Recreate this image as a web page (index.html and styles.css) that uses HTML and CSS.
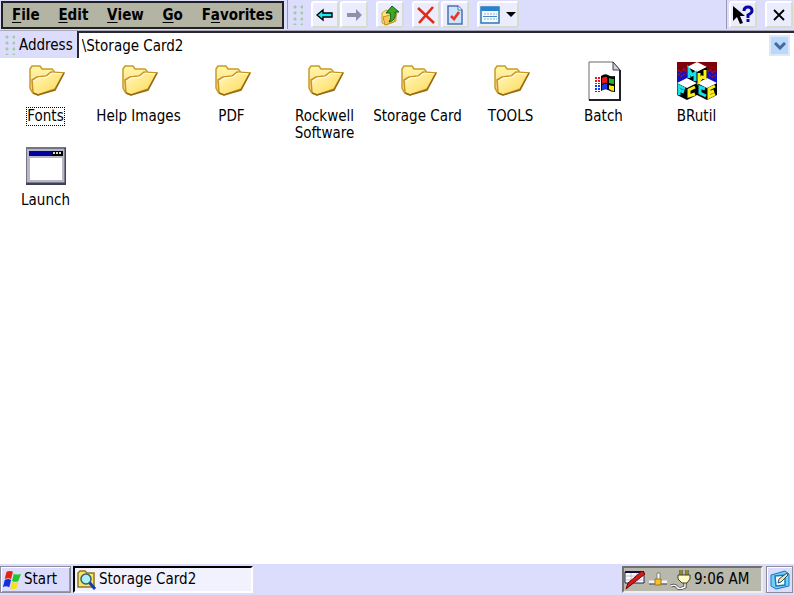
FILE: index.html
```html
<!DOCTYPE html>
<html lang="en">
<head>
  <meta charset="UTF-8">
  <meta name="viewport" content="width=device-width, initial-scale=1.0">
  <title>Storage Card2</title>
  <link rel="stylesheet" href="styles.css">
</head>
<body>
  <!-- shared icons -->
  <svg class="defs" width="0" height="0" aria-hidden="true">
    <defs>
      <linearGradient id="back" x1="0" y1="0" x2="0" y2="1">
        <stop offset="0" stop-color="#fffaa0"/>
        <stop offset="1" stop-color="#ffcf9c"/>
      </linearGradient>
      <linearGradient id="front" x1="0" y1="0" x2="1" y2="1">
        <stop offset="0" stop-color="#fff8c0"/>
        <stop offset="1" stop-color="#ffd850"/>
      </linearGradient>
      <symbol id="folder" viewBox="0 0 40 40">
        <path d="M4 8l2-3h8l2 3h10l2 2v17l-17 6-5-2-2-4z" fill="url(#back)" stroke="#c89c28" stroke-width="1.5"/>
        <path d="M6 19l5-3 9-1 5-4 13 1-9 16-17 6-5-2z" fill="url(#front)" stroke="#c89420" stroke-width="1.5"/>
        <path d="M8 20l4-3 9-1 5-4 11 1" fill="none" stroke="#fff"/>
        <path d="M38 12l-9 17-17 5-5-2" fill="none" stroke="#946c14" stroke-width="1.5"/>
      </symbol>
    </defs>
  </svg>

  <header class="toolbar">
    <nav class="menu">
      <button><u>F</u>ile</button>
      <button><u>E</u>dit</button>
      <button><u>V</u>iew</button>
      <button><u>G</u>o</button>
      <button>F<u>a</u>vorites</button>
    </nav>
    <div class="tools">
      <span class="grip"></span>
      <div class="group">
        <button class="tool" aria-label="Back">
          <svg width="18" height="16" viewBox="0 0 18 16"><path d="M1 8l6-5v3h9v4H7v3z" fill="#18e8f0" stroke="#000" stroke-width="1.4"/></svg>
        </button>
        <button class="tool" aria-label="Forward">
          <svg width="18" height="16" viewBox="0 0 18 16"><path d="M17 8l-6-6v4H2v4h9v4z" fill="#9090ac"/></svg>
        </button>
      </div>
      <button class="tool" aria-label="Up">
        <svg width="20" height="22" viewBox="0 0 20 22">
          <path d="M2 9l4-3 3 1h7v10l-10 4-4-2z" fill="#fce480" stroke="#c8a030"/>
          <path d="M3 13l7-2 7-2-3 9-9 3z" fill="#f8c858" stroke="#c09020"/>
          <path d="M9 18c2-3 2-6 1-9H6l6-7 7 6h-4c1 5-1 9-6 10z" fill="#38a828" stroke="#146010"/>
        </svg>
      </button>
      <div class="group">
        <button class="tool" aria-label="Delete">
          <svg width="20" height="20" viewBox="0 0 20 20"><path d="M2 3l16 15M17 2L3 18" fill="none" stroke="#e02c14" stroke-width="2.6"/></svg>
        </button>
        <button class="tool" aria-label="Properties">
          <svg width="18" height="20" viewBox="0 0 18 20">
            <path d="M2 1h10l4 4v14H2z" fill="#cce4fc" stroke="#4c70b0" stroke-width="1.5"/>
            <path d="M12 1v4h4" fill="#fff" stroke="#4c70b0"/>
            <path d="M5 11l3 3 5-7" fill="none" stroke="#e83420" stroke-width="2.6"/>
          </svg>
        </button>
      </div>
      <button class="tool views" aria-label="Views">
        <svg width="20" height="18" viewBox="0 0 20 18">
          <path d="M1 1h18v16H1z" fill="#f4faff" stroke="#2878b8" stroke-width="1.5"/>
          <path d="M1 1h18v4H1z" fill="#2484d0"/>
          <path d="M4 8h13M4 13h13" stroke="#a0a8b0" stroke-dasharray="2 1"/>
          <path d="M3 10.500h14" stroke="#3c88d0"/>
        </svg>
        <svg width="10" height="5" viewBox="0 0 10 5"><path d="M0 0h10L5 5z"/></svg>
      </button>
    </div>
    <div class="window-tools">
      <button class="tool" aria-label="Help">
        <svg width="22" height="20" viewBox="0 0 22 20">
          <path d="M1 1v15l4-4 3 7 3-1-3-7h5z"/>
          <path d="M12 6q0-4 4-4t4 4q0 2-4 4v3M16 14v3" fill="none" stroke="#0808a0" stroke-width="3"/>
        </svg>
      </button>
      <button class="tool" aria-label="Close">
        <svg width="12" height="12" viewBox="0 0 12 12"><path d="M1 1l10 10M11 1L1 11" stroke="#000" stroke-width="1.8"/></svg>
      </button>
    </div>
  </header>

  <div class="address">
    <span class="grip"></span>
    <label for="path">Address</label>
    <div class="field">
      <input id="path" type="text" value="\Storage Card2">
      <button aria-label="Show addresses">
        <svg width="12" height="8" viewBox="0 0 12 8"><path d="M1 1l5 5 5-5" fill="none" stroke="#486898" stroke-width="3"/></svg>
      </button>
    </div>
  </div>

  <main class="files">
    <a class="file selected" href="#"><svg class="icon"><use href="#folder"/></svg><span>Fonts</span></a>
    <a class="file" href="#"><svg class="icon"><use href="#folder"/></svg><span>Help Images</span></a>
    <a class="file" href="#"><svg class="icon"><use href="#folder"/></svg><span>PDF</span></a>
    <a class="file" href="#"><svg class="icon"><use href="#folder"/></svg><span>Rockwell Software</span></a>
    <a class="file" href="#"><svg class="icon"><use href="#folder"/></svg><span>Storage Card</span></a>
    <a class="file" href="#"><svg class="icon"><use href="#folder"/></svg><span>TOOLS</span></a>
    <a class="file" href="#">
      <svg class="icon" viewBox="0 0 40 40">
        <path d="M5 1h24l7 8v30H5z" fill="#fff" stroke="#686870"/>
        <path d="M36 9v30H5" fill="none" stroke="#202028" stroke-width="2"/>
        <path d="M29 1v8h7z" fill="#d0d0dc" stroke="#404048"/>
        <path d="M17 15q4-3 7-1t7 1v16q-4 0-7-2t-7 1z" fill="#000"/>
        <path d="M18 17q3-2 5-1v6q-2-1-5 1z" fill="#e81818"/>
        <path d="M25 17q2 1 5 1v5q-3 0-5-1z" fill="#18b828"/>
        <path d="M18 24q3-2 5-1v5q-3-1-5 1z" fill="#1838e8"/>
        <path d="M25 24q2 1 5 1v5q-3 0-5-2z" fill="#f8e818"/>
        <path d="M12 16v7M15 16v7" stroke="#e81818" stroke-width="2" stroke-dasharray="2 1"/>
        <path d="M12 24v7M15 24v7" stroke="#1838e8" stroke-width="2" stroke-dasharray="2 1"/>
      </svg>
      <span>Batch</span>
    </a>
    <a class="file" href="#">
      <svg class="icon" viewBox="0 0 40 40">
        <path d="M0 1h40v10H0z" fill="#800008"/>
        <path d="M0 11h40v11H0z" fill="#1010c8"/>
        <path d="M1 9l3 2 3-3 3 4M30 11l3-2 3 3 3-3M1 13l3 2 4-2M32 14l4 2 3-2" fill="none" stroke="#901040" stroke-width="2" stroke-dasharray="2 1"/>
        <path d="M10 6l10-5 10 5-10 5zM0 22l10-5 10 5-10 5zM20 22l10-5 10 5-10 5z" fill="#fff"/>
        <path d="M10 6l10 5v11l-10-5zM30 6l-10 5v11l10-5zM0 22l10 5v12L0 34zM20 22l-10 5v12l10-5zM20 22l10 5v12l-10-5zM40 22l-10 5v12l10-5z"/>
        <path d="M12 17V9l3 5 3-2v8M2 34v-9l6 3M2 29l5 2M28 28l-5-2v6l6 3" fill="none" stroke="#18e0e8" stroke-width="3"/>
        <path d="M22 12v8l3-4 3 1V9M18 26l-6 3v6l6-2M38 25l-6 3v8l6-3M32 32l5-2" fill="none" stroke="#f8f018" stroke-width="3"/>
      </svg>
      <span>BRutil</span>
    </a>
    <a class="file" href="#">
      <svg class="icon" viewBox="0 0 40 40">
        <path d="M0 3h40v36H0z" fill="#b8b8c4"/>
        <path d="M0 39V3h40" fill="none" stroke="#747488" stroke-width="2"/>
        <path d="M40 3v36H0" fill="none" stroke="#40405c" stroke-width="3"/>
        <path d="M3 6h34v5H3z" fill="#0000a0"/>
        <path d="M26 6h11v5H26z"/>
        <path d="M27 8h9" stroke="#d8d8d8" stroke-width="2" stroke-dasharray="2 1"/>
        <path d="M4 13h32v22H4z" fill="#fff"/>
      </svg>
      <span>Launch</span>
    </a>
  </main>

  <footer class="taskbar">
    <button class="start">
      <svg width="20" height="22" viewBox="0 0 22 22">
        <path d="M5 2q4-2 7 0l-2 8q-3-2-7 0z" fill="#e82010"/>
        <path d="M13 4q4 2 8 0l-3 8q-3 2-7 0z" fill="#20c830"/>
        <path d="M3 11q4-2 7 0l-2 8q-4-2-7 0z" fill="#1030e0"/>
        <path d="M11 13q3 2 7 0l-2 7q-4 2-7 0z" fill="#f8e020"/>
      </svg>
      Start
    </button>
    <button class="task">
      <svg width="20" height="20" viewBox="0 0 20 20">
        <path d="M1 3l2-2h5l2 2h7v14H1z" fill="#f8e468" stroke="#907820" stroke-width="1.5"/>
        <path d="M12 12l6 7" stroke="#103cb0" stroke-width="3"/>
        <circle cx="9" cy="9" r="5" fill="#a8f0fc" stroke="#385c70" stroke-width="1.5"/>
      </svg>
      Storage Card2
    </button>
    <div class="tray">
      <svg width="22" height="22" viewBox="0 0 22 22">
        <path d="M1 3h19v11H1z" fill="#fff" stroke="#202048"/>
        <path d="M1 3h19" stroke="#101040" stroke-width="2"/>
        <path d="M2 7h17M2 11h17M7 4v9M13 4v9" stroke="#b8b8cc"/>
        <path d="M18 2l3 3L7 16l-5 4 2-6z" fill="#d81818" stroke="#700808"/>
      </svg>
      <svg width="20" height="22" viewBox="0 0 20 22">
        <path d="M1 13h18" stroke="#f4f4f4" stroke-width="3"/>
        <path d="M1 15h18" stroke="#404048"/>
        <path d="M9 4h3v7H9z" fill="#fff" stroke="#808080"/>
        <path d="M7 10h6v6H7z" fill="#f8c030" stroke="#a07810"/>
      </svg>
      <svg width="22" height="22" viewBox="0 0 22 22">
        <path d="M1 17q4-2 6 1t8 0v-4" fill="none" stroke="#303030" stroke-width="3"/>
        <path d="M1 17q4-2 6 1t8 0v-4" fill="none" stroke="#fff" stroke-width="1.5"/>
        <path d="M11 1v6M17 1v6" stroke="#303030" stroke-width="3"/>
        <path d="M11 1v6M17 1v6" stroke="#f0e040"/>
        <path d="M8 6h12v4l-3 4h-5l-4-4z" fill="#fffcc8" stroke="#404018"/>
      </svg>
      <time>9:06 AM</time>
    </div>
    <button class="desktop" aria-label="Show desktop">
      <svg width="20" height="20" viewBox="0 0 20 20">
        <path d="M1 5l14-4 4 3v12L6 19l-5-3z" fill="#70d0f8" stroke="#1878c0"/>
        <path d="M5 6l10-1v10l-9 1z" fill="#fff" stroke="#1878c0" stroke-width="1.5"/>
        <path d="M8 13l1-4 8-6 1 2-7 7z" fill="#f4e890" stroke="#205080"/>
      </svg>
    </button>
  </footer>
</body>
</html>
```
FILE: styles.css
```css
* {
  box-sizing: border-box;
  margin: 0;
  padding: 0;
}

body {
  display: flex;
  flex-direction: column;
  min-height: 100vh;
  background: #fff;
  color: #000;
  font: 15px/17px "DejaVu Sans Condensed", "Noto Sans", sans-serif;
}

button,
input {
  border: none;
  background: none;
  color: inherit;
  font: inherit;
}

button {
  display: flex;
  align-items: center;
}

svg {
  display: block;
  flex: none;
}

.defs {
  position: absolute;
}

/* toolbar */
.toolbar {
  display: flex;
  height: 31px;
  background: #dcdcfc;
  border-bottom: 1px solid #a8a8b8;
}

.menu {
  display: flex;
  align-items: center;
  justify-content: space-between;
  width: 283px;
  height: 28px;
  margin: 1px 3px 0 1px;
  padding: 0 9px;
  border: 2px solid #202020;
  background: #b4b4a4;
  font-weight: bold;
}

.menu u {
  text-underline-offset: 2px;
}

.tools {
  display: flex;
  align-items: center;
  gap: 8px;
  flex: 1;
  height: 29px;
  padding-left: 5px;
  border-left: 1px solid #9898b0;
}

.group {
  display: flex;
  gap: 1px;
}

.grip {
  width: 10px;
  height: 20px;
  background: radial-gradient(circle at 2px 2px, #a4c8a8 1px, transparent 2px) 0 0 / 7px 6px;
}

.tool {
  justify-content: center;
  gap: 6px;
  width: 28px;
  height: 27px;
  border: 2px solid #fff;
  border-right-color: #d8dccc;
  border-bottom-color: #d8dccc;
  border-radius: 3px;
  background: #ececff;
}

.views {
  width: 42px;
}

.window-tools {
  display: flex;
  align-items: center;
  gap: 8px;
  height: 29px;
  padding: 0 1px 0 2px;
  border-left: 1px solid #9898b0;
}

/* address bar */
.address {
  display: flex;
  height: 27px;
  align-items: center;
  padding-left: 5px;
  background: #dcdcfc;
}

.address label {
  margin: 2px 4px 0;
}

.field {
  display: flex;
  flex: 1;
  min-width: 0;
  height: 27px;
  border-top: 2px solid #282830;
  border-left: 2px solid #282830;
  background: #fff;
}

.field input {
  flex: 1;
  min-width: 0;
  padding: 2px 0 0 3px;
  outline: none;
}

.field button {
  justify-content: center;
  width: 21px;
  height: 21px;
  margin: 2px 4px;
  border: 2px solid #e0e8f8;
  background: #b8d8fc;
}

/* files */
.files {
  display: grid;
  grid-template-columns: repeat(auto-fill, 93px);
  grid-auto-rows: 84px;
  align-content: start;
  flex: 1;
  padding-top: 3px;
}

.file {
  display: flex;
  flex-direction: column;
  align-items: center;
  gap: 7px;
  padding-right: 2px;
  color: #000;
  text-align: center;
  text-decoration: none;
}

.icon {
  width: 40px;
  height: 40px;
}

.selected span {
  outline: 1px dotted #000;
}

/* taskbar */
.taskbar {
  display: flex;
  align-items: center;
  height: 31px;
  background: #dcdcfc;
}

.start,
.task,
.tray,
.desktop {
  height: 27px;
}

.start {
  gap: 2px;
  width: 71px;
  margin-right: 2px;
  padding-left: 1px;
  border: 1px solid #8c8c98;
  box-shadow: inset 1px 1px #fff, inset -1px -1px #9c9ca8;
}

.task {
  gap: 2px;
  width: 180px;
  padding-left: 2px;
  border: 2px solid #fff;
  border-top-color: #000;
  border-left-color: #000;
  background: #f2f2ff;
}

.tray {
  display: flex;
  align-items: center;
  gap: 2px;
  width: 141px;
  margin-left: auto;
  border: 2px solid #eee;
  border-top-color: #707070;
  border-left-color: #707070;
  background: #b8b8ac;
}

.desktop {
  justify-content: center;
  width: 27px;
  margin: 0 1px 0 3px;
  border: 1px solid #8c8c98;
  box-shadow: inset 1px 1px #fff;
}
```
